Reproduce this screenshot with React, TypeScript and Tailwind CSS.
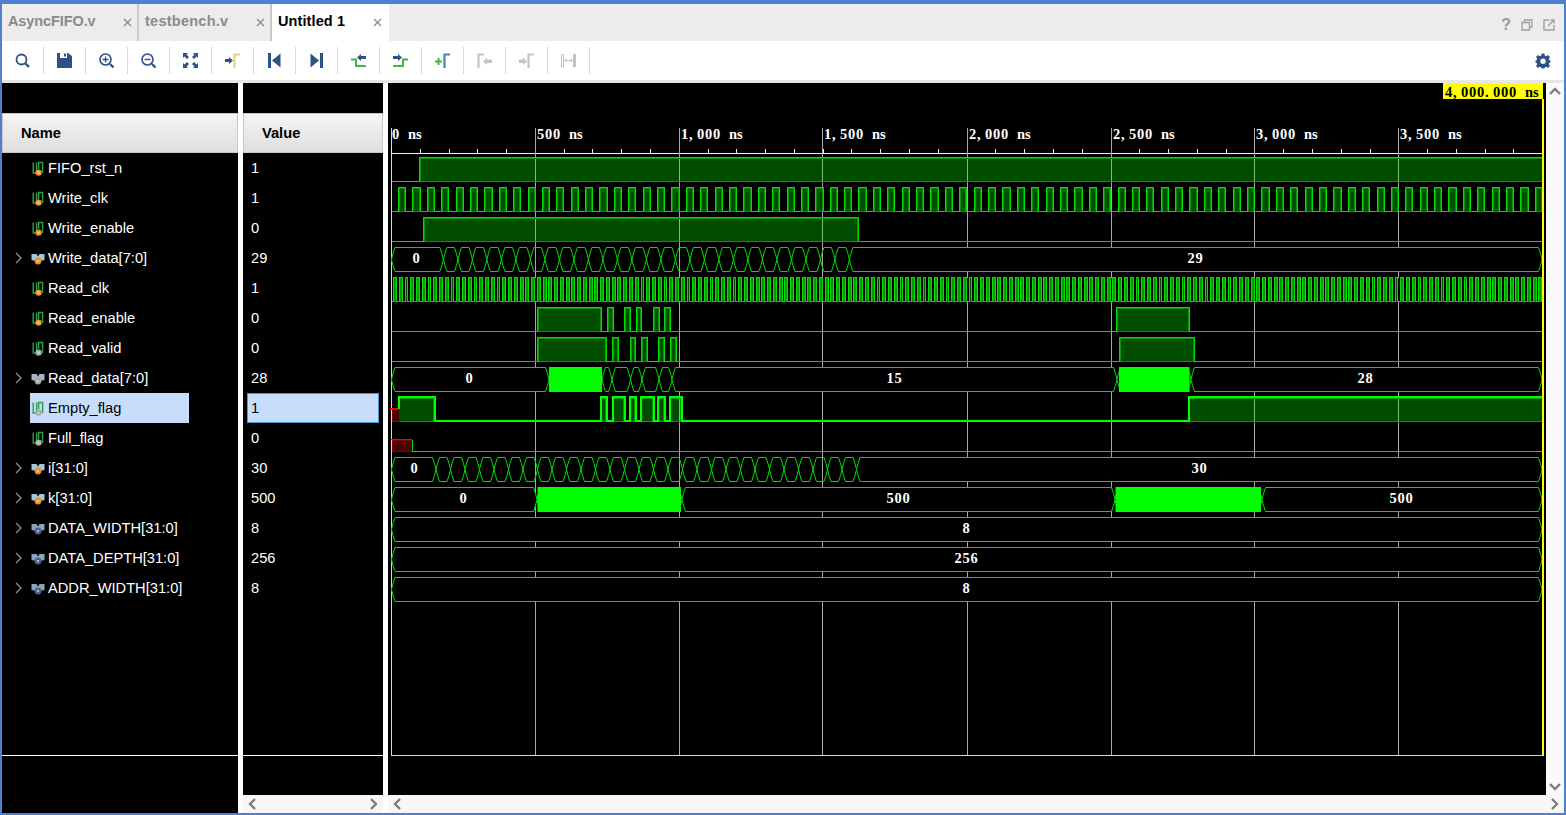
import React from "react";

const G = "#00ff00";
const MID = "#009a00";
const X0 = 391.5;
const XEND = 1542;
const rowTop = (i: number) => 153 + i * 30;
const hi = (i: number) => rowTop(i) + 4.5;
const lo = (i: number) => rowTop(i) + 28.5;
const r = (n: number) => Math.round(n - 0.5) + 0.5;

type P = [number, number];

function Digital({
  row,
  pulses,
  strong,
  start = X0,
  opaque,
}: {
  row: number;
  pulses: P[];
  strong?: boolean;
  start?: number;
  opaque?: boolean;
}) {
  const h = hi(row) - (strong ? 0.5 : 0);
  const l = lo(row) - (strong ? 0.5 : 0);
  let d = `M${start} ${l}`;
  const fills: React.ReactNode[] = [];
  pulses.forEach(([a0, b0], i) => {
    const a = r(a0);
    const b = r(b0);
    const open = b0 > XEND;
    d += ` L${a} ${l} L${a} ${h} L${b} ${h}` + (open ? "" : ` L${b} ${l}`);
    fills.push(<rect key={i} x={a} y={h} width={b - a} height={l - h} fill={G} fillOpacity={0.3} />);
    fills.push(
      <rect
        key={"m" + i}
        x={a + 1}
        y={h + 1}
        width={Math.max(b - a - 2, 0)}
        height={l - h - 1}
        fill="none"
        stroke={MID}
        strokeWidth={1}
      />
    );
  });
  const last = pulses[pulses.length - 1];
  d += last && last[1] > XEND ? "" : ` L${XEND} ${l}`;
  return (
    <g shapeRendering="crispEdges">
      {opaque ? <rect x={392} y={hi(row)} width={XEND - 392} height={lo(row) - hi(row)} fill="#000000" /> : null}
      {fills}
      <path d={d} fill="none" stroke={strong ? G : "#00e000"} strokeWidth={strong ? 2 : 1} />
    </g>
  );
}

function clock(first: number, period: number, end: number): P[] {
  const out: P[] = [];
  for (let x = first; x < end; x += period) out.push([x, Math.min(x + period / 2, XEND)]);
  return out;
}

function Bus({
  row,
  cross,
  solid = [],
  labels = [],
}: {
  row: number;
  cross: number[];
  solid?: P[];
  labels?: [number, string][];
}) {
  const t = hi(row);
  const b = lo(row);
  const m = (t + b) / 2;
  const w = 3.5;
  const all = [X0, ...cross, XEND];
  const segs: { d: string; wide: boolean }[] = [];
  for (let i = 0; i < all.length - 1; i++) {
    const a = all[i];
    const c = all[i + 1];
    segs.push({
      d: `M${a} ${m} L${a + 1.5} ${m - 6} L${a + w} ${t} L${c - w} ${t} L${c - 1.5} ${m - 6} L${c} ${m} L${c - 1.5} ${m + 6} L${c - w} ${b} L${a + w} ${b} L${a + 1.5} ${m + 6} Z`,
      wide: c - a > 25,
    });
  }
  return (
    <g>
      {segs.map((s, i) => (
        <path key={i} d={s.d} fill={s.wide ? "#000000" : "none"} stroke="#00e000" strokeWidth={1} />
      ))}
      {solid.map(([a, c], i) => (
        <rect key={i} x={a} y={t - 0.5} width={c - a} height={b - t + 1} fill={G} />
      ))}
      {labels.map(([x, s], i) => (
        <MonoText key={i} x={x} y={m + 3} text={s} anchor />
      ))}
    </g>
  );
}

function MonoText({
  x,
  y,
  text,
  anchor,
  fill = "#ffffff",
}: {
  x: number;
  y: number;
  text: string;
  anchor?: boolean;
  fill?: string;
}) {
  const cw = 8;
  const left = anchor ? x - (text.length * cw) / 2 + 0.5 : x;
  const xs = text
    .split("")
    .map((_, i) => left + i * cw)
    .join(" ");
  return (
    <text x={xs} y={y} fontFamily="'Liberation Serif', serif" fontWeight={700} fontSize={14.5} fill={fill} xmlSpace="preserve">
      {text}
    </text>
  );
}

function seq(start: number, step: number, n: number) {
  return Array.from({ length: n }, (_, i) => start + step * i);
}

const GRID = [535.5, 679.5, 822.5, 967.5, 1111.5, 1254.5, 1398.5];
const RULER: [number, string][] = [
  [392, "0 ns"],
  [537, "500 ns"],
  [681, "1,000 ns"],
  [824, "1,500 ns"],
  [969, "2,000 ns"],
  [1113, "2,500 ns"],
  [1256, "3,000 ns"],
  [1400, "3,500 ns"],
];

function Waves() {
  const ticks = seq(X0, 28.78, 40);
  return (
    <svg width={1158} height={712} viewBox="388 83 1158 712" className="block">
      <rect x={1443} y={83} width={100} height={16} fill="#ffff00" />
      <MonoText x={1445} y={97} text="4,000.000 ns" fill="#000000" />
      {RULER.map(([x, s]) => (
        <MonoText key={x} x={x} y={139} text={s} />
      ))}
      <g shapeRendering="crispEdges">
        <path d="M391.5 128 V755.5 H1543" fill="none" stroke="#d8d8d8" />
        <path d="M391 153.5 H1543" stroke="#f0f0f0" />
        {ticks.map((x) => (
          <path key={x} d={`M${r(x)} 149 V153`} stroke="#f0f0f0" />
        ))}
        {GRID.map((x) => (
          <path key={x} d={`M${x} 128 V755`} stroke="#a8a8a8" />
        ))}
      </g>

      <Digital row={0} pulses={[[419.5, XEND + 1]]} />
      <Digital row={1} pulses={clock(398.5, 14.39, XEND)} />
      <Digital row={2} pulses={[[423.5, 858.5]]} />
      <Bus row={3} cross={seq(443.4, 14.5, 29)} labels={[[416, "0"], [1195, "29"]]} />
      <Digital row={4} opaque pulses={clock(393.5, 5.756, XEND)} />
      <Digital row={5} pulses={[[537, 601.7], [607.3, 613.7], [624.3, 630.7], [636, 641.7], [653.3, 659.3], [664.3, 670.7], [1116, 1189.7]]} />
      <Digital row={6} pulses={[[537, 606.7], [612.3, 618.7], [630.3, 635.7], [641.3, 647.7], [658.3, 664.7], [670.3, 676.7], [1119, 1194.7]]} />
      <Bus
        row={7}
        cross={[549, 602, 612, 630.5, 642, 659, 672, 1117, 1191]}
        solid={[[549, 602], [1119, 1189.5]]}
        labels={[[469, "0"], [894, "15"], [1365, "28"]]}
      />
      <Digital
        row={8}
        strong
        start={398.5}
        pulses={[[398.5, 434.5], [600.7, 606.7], [612, 624.3], [629.7, 635.7], [640.7, 653.3], [657.7, 664.3], [669.7, 681.3], [1188.5, XEND + 1]]}
      />
      <g shapeRendering="crispEdges">
        <rect x={392} y={409} width={7} height={12} fill="#4d0000" stroke="#8b0000" />
        <rect x={390} y={408} width={8} height={2} fill="#ff0000" />
        <rect x={392} y={440} width={20} height={11} fill="#4d0000" stroke="#8b0000" />
        <rect x={391} y={439} width={21} height={1} fill="#ff0000" />
      </g>
      <Digital row={9} start={412.5} pulses={[]} />
      <path d="M412.5 439.5 V451.5" stroke="#00e000" shapeRendering="crispEdges" />
      <Bus row={10} cross={seq(436, 14.5, 30)} labels={[[414, "0"], [1199, "30"]]} />
      <Bus
        row={11}
        cross={[537, 682, 1115, 1262]}
        solid={[[537.5, 681], [1115.5, 1261]]}
        labels={[[463, "0"], [898, "500"], [1401, "500"]]}
      />
      <Bus row={12} cross={[]} labels={[[966, "8"]]} />
      <Bus row={13} cross={[]} labels={[[966, "256"]]} />
      <Bus row={14} cross={[]} labels={[[966, "8"]]} />

      <rect x={1542} y={99} width={2} height={656.5} fill="#ffff00" shapeRendering="crispEdges" />
    </svg>
  );
}

function SigIcon({ kind, badge }: { kind: "wire" | "bus" | "const"; badge: string }) {
  const dot = badge === "v" ? "#e8942a" : badge === "c" ? "#47658f" : "#a8a8a8";
  const mark = badge === "g" ? "#e8e8e8" : "#ffe2b8";
  if (kind === "wire") {
    return (
      <svg width={16} height={16} viewBox="0 0 16 16" className="mt-[1px] shrink-0">
        <path d="M3.2 1.5 V12 H6.6 V1.5 M8.6 8 V1.5 H12.6 V12" fill="none" stroke="#2f9e48" strokeWidth={1.4} />
        <circle cx={8.6} cy={11.6} r={3.2} fill={dot} />
        <path d="M7.6 10.6 L8.6 12.8 L9.6 10.6" fill="none" stroke={mark} strokeWidth={0.8} />
      </svg>
    );
  }
  const wedge = kind === "const" ? "#8ba3bd" : badge === "g" ? "#a9b4bf" : "#a4c4dc";
  return (
    <svg width={16} height={16} viewBox="0 0 16 16" className="shrink-0">
      <path d="M1.5 4 H6.5 L8 6.5 L9.5 4 H14.5 V10 L10 11 H6 L1.5 10 Z" fill={wedge} />
      <circle cx={8} cy={11} r={3.4} fill={dot} />
      <circle cx={8} cy={11} r={1.1} fill={mark} opacity={0.8} />
    </svg>
  );
}

const ROWS: { name: string; value: string; kind: "wire" | "bus" | "const"; badge: string; exp?: boolean; sel?: boolean }[] = [
  { name: "FIFO_rst_n", value: "1", kind: "wire", badge: "v" },
  { name: "Write_clk", value: "1", kind: "wire", badge: "v" },
  { name: "Write_enable", value: "0", kind: "wire", badge: "v" },
  { name: "Write_data[7:0]", value: "29", kind: "bus", badge: "v", exp: true },
  { name: "Read_clk", value: "1", kind: "wire", badge: "v" },
  { name: "Read_enable", value: "0", kind: "wire", badge: "v" },
  { name: "Read_valid", value: "0", kind: "wire", badge: "g" },
  { name: "Read_data[7:0]", value: "28", kind: "bus", badge: "g", exp: true },
  { name: "Empty_flag", value: "1", kind: "wire", badge: "g", sel: true },
  { name: "Full_flag", value: "0", kind: "wire", badge: "g" },
  { name: "i[31:0]", value: "30", kind: "bus", badge: "v", exp: true },
  { name: "k[31:0]", value: "500", kind: "bus", badge: "v", exp: true },
  { name: "DATA_WIDTH[31:0]", value: "8", kind: "const", badge: "c", exp: true },
  { name: "DATA_DEPTH[31:0]", value: "256", kind: "const", badge: "c", exp: true },
  { name: "ADDR_WIDTH[31:0]", value: "8", kind: "const", badge: "c", exp: true },
];

function Chev({ dir, className }: { dir: "l" | "r" | "u" | "d"; className?: string }) {
  const d = { l: "M9 2 L4 7 L9 12", r: "M5 2 L10 7 L5 12", u: "M2 9 L7 4 L12 9", d: "M2 5 L7 10 L12 5" }[dir];
  return (
    <svg width={14} height={14} viewBox="0 0 14 14" className={className}>
      <path d={d} fill="none" stroke="#7d7d7d" strokeWidth={2.4} />
    </svg>
  );
}

const NAVY = "#2f5188";
const GREEN = "#43b649";
const OFF = "#c4c4c4";

const TOOL_ICONS: React.ReactNode[] = [
  <g key="a" fill="none" stroke={NAVY}>
    <circle cx="7.5" cy="7.5" r="5" strokeWidth="1.8" />
    <path d="M11.5 11.5 L15 15" strokeWidth="2.4" />
  </g>,
  <path key="b" d="M1 1 H4 V6 H11 V1 H12 L16 4 V16 H1 Z M8 1.5 H10 V4.5 H8 Z" fill={NAVY} fillRule="evenodd" />,
  <g key="c" fill="none" stroke={NAVY}>
    <circle cx="7.5" cy="7.5" r="5.5" strokeWidth="1.6" />
    <path d="M4.5 7.5 H10.5 M7.5 4.5 V10.5" strokeWidth="1.3" />
    <path d="M12 12 L15.5 15.5" strokeWidth="2.4" />
  </g>,
  <g key="d" fill="none" stroke={NAVY}>
    <circle cx="7.5" cy="7.5" r="5.5" strokeWidth="1.6" />
    <path d="M4.5 7.5 H10.5" strokeWidth="1.4" />
    <path d="M12 12 L15.5 15.5" strokeWidth="2.4" />
  </g>,
  <g key="e" fill={NAVY}>
    <path d="M1 1 H6 L4.5 2.5 L7 5 L5 7 L2.5 4.5 L1 6 Z" />
    <path d="M16 1 H11 L12.5 2.5 L10 5 L12 7 L14.5 4.5 L16 6 Z" />
    <path d="M1 16 H6 L4.5 14.5 L7 12 L5 10 L2.5 12.5 L1 11 Z" />
    <path d="M16 16 H11 L12.5 14.5 L10 12 L12 10 L14.5 12.5 L16 11 Z" />
  </g>,
  <g key="f">
    <path d="M1 7 H5 V5 L9 8.5 L5 12 V10 H1 Z" fill={NAVY} />
    <path d="M10.5 16 V2.5 H16" fill="none" stroke="#e8d27a" strokeWidth="2.2" />
  </g>,
  <g key="g" fill={NAVY}>
    <rect x="2" y="1" width="3" height="15" />
    <path d="M14.5 1.5 V15.5 L6 8.5 Z" />
  </g>,
  <g key="h" fill={NAVY}>
    <rect x="12" y="1" width="3" height="15" />
    <path d="M2.5 1.5 V15.5 L11 8.5 Z" />
  </g>,
  <g key="i">
    <path d="M1 7.5 H6 V14 H16" fill="none" stroke={GREEN} strokeWidth="2" />
    <path d="M16 4 H11 V2 L7 5.5 L11 9 V7 H16 Z" fill={NAVY} />
  </g>,
  <g key="j">
    <path d="M1 14 H11 V7.5 H16" fill="none" stroke={GREEN} strokeWidth="2" />
    <path d="M1 4 H6 V2 L10 5.5 L6 9 V7 H1 Z" fill={NAVY} />
  </g>,
  <g key="k">
    <path d="M1 9.5 H8 M4.5 6 V13" stroke={GREEN} strokeWidth="2" fill="none" />
    <path d="M10.5 16 V2.5 H16" fill="none" stroke="#3f87bd" strokeWidth="2.2" />
  </g>,
  <g key="l">
    <path d="M2.5 16 V2.5 H8" fill="none" stroke={OFF} strokeWidth="2.2" />
    <path d="M16 7.5 H11 V5.5 L7 9.5 L11 13 V11 H16 Z" fill={OFF} />
  </g>,
  <g key="m">
    <path d="M10.5 16 V2.5 H16" fill="none" stroke={OFF} strokeWidth="2.2" />
    <path d="M1 7.5 H5 V5.5 L9 9.5 L5 13 V11 H1 Z" fill={OFF} />
  </g>,
  <g key="n" fill="none" stroke={OFF}>
    <rect x="1.5" y="2.5" width="2" height="12" strokeWidth="1" />
    <rect x="13.5" y="2.5" width="2" height="12" fill={OFF} strokeWidth="1" />
    <path d="M4.5 8.5 H12.5 M6.5 6.5 L4.5 8.5 L6.5 10.5 M10.5 6.5 L12.5 8.5 L10.5 10.5" strokeWidth="1" />
  </g>,
];

function Tab({ label, active, w, extra }: { label: string; active?: boolean; w: string; extra?: string }) {
  return (
    <div
      className={`relative flex h-full shrink-0 items-center pl-[6px] text-[14.5px] font-bold ${w} ${
        active ? "bg-white text-black" : "border-r-[2px] border-[#c8c8c8] text-[#8a8a8a]"
      }`}
    >
      <span className={`-mt-[1px] ${extra ?? ""}`}>{label}</span>
      <svg
        width={9}
        height={9}
        viewBox="0 0 9 9"
        className={`absolute top-[14px] ${active ? "right-[7px]" : "right-[5px]"}`}
      >
        <path d="M1 1 L8 8 M8 1 L1 8" stroke="#8a8a8a" strokeWidth={1.3} fill="none" />
      </svg>
    </div>
  );
}

export default function App() {
  return (
    <div
      className="flex h-[815px] w-[1566px] flex-col overflow-hidden border-x-[2px] border-b-[2px] border-t-[4px] border-[#4e7fd1] bg-white"
      style={{ fontFamily: "'Liberation Sans', Arial, sans-serif" }}
    >
      {/* tabs */}
      <div className="flex h-[37px] shrink-0 items-stretch justify-between bg-[#ececec]">
        <div className="flex h-full">
          <Tab label="AsyncFIFO.v" w="w-[137px]" extra="tracking-[-0.1px]" />
          <Tab label="testbench.v" w="w-[133px]" extra="tracking-[0.25px]" />
          <Tab label="Untitled 1" active w="w-[117px]" extra="tracking-[0.1px]" />
        </div>
        <div className="flex items-center gap-[10px] pr-[9px] pt-[5px]">
          <span className="text-[16px] font-bold leading-none text-[#9a9a9a]">?</span>
          <svg width={12} height={12} viewBox="0 0 12 12">
            <path d="M3.5 3.5 V1 H11 V8 H8.5 M1 3.5 H8.5 V11 H1 Z" fill="none" stroke="#a0a0a0" strokeWidth={1.3} />
          </svg>
          <svg width={12} height={12} viewBox="0 0 12 12">
            <path d="M6 1 H1 V11 H11 V6 M5 7 L11 1 M7.5 1 H11 V4.5" fill="none" stroke="#a0a0a0" strokeWidth={1.4} />
          </svg>
        </div>
      </div>

      {/* toolbar */}
      <div className="flex h-[39px] shrink-0 items-center border-b-0 bg-white">
        {TOOL_ICONS.map((ic, i) => (
          <div key={i} className="flex h-[27px] w-[42px] items-center justify-center border-r-[1px] border-[#d8d8d8]">
            <svg width={17} height={17} viewBox="0 0 17 17">
              {ic}
            </svg>
          </div>
        ))}
        <div className="ml-auto pr-[13px]">
          <svg width={16} height={16} viewBox="0 0 16 16">
            <path
              d="M6.6 0.5 H9.4 L9.8 2.6 L11.2 3.2 L13 2 L15 4 L13.8 5.8 L14.4 7.2 L15.5 7.5 V9.5 L14.4 9.8 L13.8 11.2 L15 13 L13 15 L11.2 13.8 L9.8 14.4 L9.4 15.5 H6.6 L6.2 14.4 L4.8 13.8 L3 15 L1 13 L2.2 11.2 L1.6 9.8 L0.5 9.5 V7.5 L1.6 7.2 L2.2 5.8 L1 4 L3 2 L4.8 3.2 L6.2 2.6 Z M8 5.5 A2.7 2.7 0 1 0 8 10.9 A2.7 2.7 0 1 0 8 5.5 Z"
              fill={NAVY}
              fillRule="evenodd"
            />
          </svg>
        </div>
      </div>
      <div className="h-[3px] shrink-0 bg-[#e6e6e6]" />

      {/* body */}
      <div className="flex min-h-0 flex-1 gap-[5px] bg-white">
        {/* name column */}
        <div className="flex w-[236px] shrink-0 flex-col bg-black">
          <div className="h-[30px] shrink-0" />
          <div className="flex h-[40px] shrink-0 items-center border border-[#c8c8c8] bg-gradient-to-b from-[#f5f5f5] to-[#dedede] pl-[18px] text-[14.67px] font-bold text-black">
            Name
          </div>
          <div className="h-[603px] shrink-0 border-b-[1px] border-white">
            {ROWS.map((row) => (
              <div key={row.name} className="flex h-[30px] items-center text-[14.67px] text-white">
                <div className="flex w-[28px] shrink-0 justify-end pr-[7px]">
                  {row.exp ? (
                    <svg width={10} height={12} viewBox="0 0 10 12">
                      <path d="M3 1 L8 6 L3 11" fill="none" stroke="#8a8a8a" strokeWidth={1.4} />
                    </svg>
                  ) : null}
                </div>
                <div className={`flex h-[30px] w-[159px] items-center gap-[2px] ${row.sel ? "bg-[#c8dcfb] text-black" : ""}`}>
                  <SigIcon kind={row.kind} badge={row.badge} />
                  <span className="whitespace-nowrap">{row.name}</span>
                </div>
              </div>
            ))}
          </div>
        </div>

        {/* value column */}
        <div className="flex w-[140px] shrink-0 flex-col">
          <div className="flex min-h-0 flex-1 flex-col bg-black">
            <div className="h-[30px] shrink-0" />
            <div className="flex h-[40px] shrink-0 items-center border border-[#c8c8c8] bg-gradient-to-b from-[#f5f5f5] to-[#dedede] pl-[18px] text-[14.67px] font-bold text-black">
              Value
            </div>
            <div className="h-[603px] shrink-0 border-b-[1px] border-white pl-[4px] pr-[4px]">
              {ROWS.map((row) => (
                <div
                  key={row.name}
                  className={`flex h-[30px] items-center text-[14.67px] ${
                    row.sel ? "border border-[#4a98d8] bg-[#c8dcfb] pl-[3px] text-black" : "pl-[4px] text-white"
                  }`}
                >
                  <span>{row.value}</span>
                </div>
              ))}
            </div>
          </div>
          <div className="flex h-[18px] shrink-0 items-center justify-between bg-[#f7f7f7] px-[3px]">
            <Chev dir="l" />
            <Chev dir="r" />
          </div>
        </div>

        {/* wave column */}
        <div className="flex min-w-0 flex-1 flex-col">
          <div className="flex min-h-0 flex-1">
            <div className="h-[712px] w-[1158px] shrink-0 bg-black">
              <Waves />
            </div>
            <div className="flex flex-1 flex-col items-center justify-between bg-[#fafafa] py-[2px]">
              <Chev dir="u" />
              <Chev dir="d" />
            </div>
          </div>
          <div className="flex h-[18px] shrink-0 items-center justify-between bg-[#f7f7f7] px-[3px]">
            <Chev dir="l" />
            <Chev dir="r" />
          </div>
        </div>
      </div>
    </div>
  );
}
